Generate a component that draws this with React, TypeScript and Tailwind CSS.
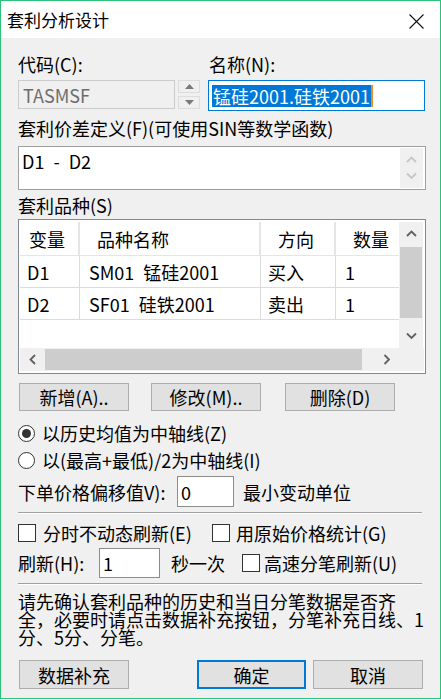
import type { ReactNode } from "react";

// Win10 style "套利分析设计" dialog

function Chev({ dir, color = "#606060" }: { dir: "up" | "down" | "left" | "right"; color?: string }) {
  const horiz = dir === "left" || dir === "right";
  const pts = {
    up: "1,6 5.5,1.5 10,6",
    down: "1,1.5 5.5,6 10,1.5",
    left: "6,1 1.5,5.5 6,10",
    right: "1.5,1 6,5.5 1.5,10",
  }[dir];
  return (
    <svg
      width={horiz ? 8 : 11}
      height={horiz ? 11 : 8}
      viewBox={horiz ? "0 0 8 11" : "0 0 11 8"}
      aria-hidden
    >
      <polyline points={pts} fill="none" stroke={color} strokeWidth="1.8" />
    </svg>
  );
}

function Tri({ up }: { up?: boolean }) {
  return (
    <svg width="9" height="5" viewBox="0 0 9 5" aria-hidden>
      <polygon points={up ? "0,5 4.5,0 9,5" : "0,0 9,0 4.5,5"} fill="#7a7a7a" />
    </svg>
  );
}

function Btn({ children, w = "w-[110px]", primary }: { children: ReactNode; w?: string; primary?: boolean }) {
  return (
    <div
      className={`flex items-center justify-center bg-[#e1e1e1] ${w} ${
        primary ? "border-2 border-[#0078d7]" : "border border-[#adadad]"
      }`}
    >
      {children}
    </div>
  );
}

function Radio({ on }: { on?: boolean }) {
  return (
    <span className="flex h-[17px] w-[17px] shrink-0 items-center justify-center rounded-full border border-[#333] bg-white">
      {on ? <span className="h-[9px] w-[9px] rounded-full bg-[#333]" /> : null}
    </span>
  );
}

function Check() {
  return <span className="block h-[18px] w-[18px] shrink-0 border border-[#333] bg-white" />;
}

function Sep() {
  return (
    <div className="w-[404px]">
      <div className="h-px bg-[#a0a0a0]" />
      <div className="h-px bg-white" />
    </div>
  );
}

const cols = ["w-[60px]", "w-[181px]", "w-[75px]", "w-[63px]"];

export default function App() {
  return (
    <div className="flex h-[699px] w-[441px] flex-col border border-[#2cc27a] bg-[#f0f0f0] font-['Noto_Sans_CJK_SC',sans-serif] text-[18px] leading-[18px] text-black">
      {/* Title bar */}
      <div className="flex h-[37px] shrink-0 items-center justify-between bg-white pl-[6px] pr-[16px]">
        <span className="text-[17px] leading-[20px]">套利分析设计</span>
        <svg width="15" height="15" viewBox="0 0 15 15" className="mt-[3px]" aria-hidden>
          <path d="M0.5 0.5 14.5 14.5M14.5 0.5 0.5 14.5" stroke="#111" strokeWidth="1.1" />
        </svg>
      </div>

      <div className="flex flex-col pl-[17px]">
        {/* code / name */}
        <div className="mt-[17px] grid grid-cols-[183px_217px] gap-x-[7px]">
          <div className="h-[18px]">代码(C):</div>
          <div className="h-[18px] pl-px">名称(N):</div>
          <div className="mt-[7px] flex">
            <div className="flex h-[29px] w-[157px] items-center border border-[#cccccc] bg-[#f0f0f0] pl-[4px] text-[#6d6d6d]">
              TASMSF
            </div>
            <div className="ml-[3px] flex flex-col gap-[3px]">
              <div className="flex h-[13px] w-[22px] items-center justify-center border border-[#dcdcdc] bg-[#f0f0f0]">
                <Tri up />
              </div>
              <div className="flex h-[13px] w-[22px] items-center justify-center border border-[#dcdcdc] bg-[#f0f0f0]">
                <Tri />
              </div>
            </div>
          </div>
          <div className="mt-[7px] flex h-[31px] w-[217px] items-center border border-[#0078d7] bg-white pl-[3px]">
            <span className="bg-[#0078d7] px-px leading-[22px] text-white">锰硅2001.硅铁2001</span>
            <span className="h-[22px] w-[2px] bg-[#f08a24]" />
          </div>
        </div>

        {/* spread definition */}
        <div className="mt-[8px] h-[18px]">套利价差定义(F)(可使用SIN等数学函数)</div>
        <div className="mt-[9px] flex h-[44px] w-[408px] border border-[#a0a0a0] bg-white">
          <div className="flex-1 whitespace-pre pl-[3px] pt-[5px] [word-spacing:5px]">D1 - D2</div>
          <div className="my-px mr-[2px] flex w-[23px] flex-col items-center justify-center gap-[8px] bg-[#f0f0f0]">
            <Chev dir="up" color="#c6c6c6" />
            <Chev dir="down" color="#c6c6c6" />
          </div>
        </div>

        {/* legs list */}
        <div className="mt-[6px] h-[18px]">套利品种(S)</div>
        <div className="mt-[5px] flex h-[155px] w-[408px] flex-col border border-[#828790] bg-white pl-px pr-px pt-[2px]">
          <div className="flex h-[126px]">
            <div className="w-[379px]">
              <div className="flex h-[34px] border-b border-[#e5e5e5]">
                {["变量", "品种名称", "方向", "数量"].map((h, i) => (
                  <div
                    key={h}
                    className={`flex items-center ${cols[i]} ${i === 0 ? "pl-[9px]" : "pl-[17px]"} ${
                      i < 3 ? "border-r-2 border-[#e5e5e5]" : ""
                    }`}
                  >
                    {h}
                  </div>
                ))}
              </div>
              {[
                ["D1", "SM01 锰硅2001", "买入", "1"],
                ["D2", "SF01 硅铁2001", "卖出", "1"],
              ].map((r) => (
                <div key={r[0]} className="flex h-[32px] border-b border-[#dcdcdc]">
                  {r.map((c, i) => (
                    <div
                      key={i}
                      className={`flex items-center whitespace-pre [word-spacing:5px] ${cols[i]} ${
                        i === 0 || i === 2 ? "pl-[7px]" : "pl-[9px]"
                      } ${i < 3 ? "border-r border-[#dcdcdc]" : ""}`}
                    >
                      {c}
                    </div>
                  ))}
                </div>
              ))}
            </div>
            <div className="flex w-[24px] flex-col bg-[#f0f0f0]">
              <div className="flex h-[24px] items-center justify-center">
                <Chev dir="up" />
              </div>
              <div className="mx-px mt-px h-[71px] bg-[#cdcdcd]" />
              <div className="h-[6px]" />
              <div className="flex h-[24px] items-center justify-center">
                <Chev dir="down" />
              </div>
            </div>
          </div>
          <div className="flex h-[23px] bg-[#f0f0f0]">
            <div className="flex w-[25px] items-center justify-center">
              <Chev dir="left" />
            </div>
            <div className="my-px h-[21px] w-[317px] bg-[#cdcdcd]" />
            <div className="w-[12px]" />
            <div className="flex w-[25px] items-center justify-center">
              <Chev dir="right" />
            </div>
          </div>
        </div>

        {/* list buttons */}
        <div className="mt-[9px] flex h-[28px] pl-px">
          <Btn>新增(A)..</Btn>
          <div className="w-[22px]" />
          <Btn>修改(M)..</Btn>
          <div className="w-[24px]" />
          <Btn>删除(D)</Btn>
        </div>

        {/* axis options */}
        <div className="mt-[13px] flex h-[18px] items-center gap-[7px]">
          <Radio on />
          <span>以历史均值为中轴线(Z)</span>
        </div>
        <div className="mt-[9px] flex h-[18px] items-center gap-[7px]">
          <Radio />
          <span>以(最高+最低)/2为中轴线(I)</span>
        </div>

        <div className="mt-[7px] flex h-[31px] items-center">
          <span className="w-[159px]">下单价格偏移值V):</span>
          <div className="flex h-[31px] w-[57px] items-center border border-[#8c8c8c] bg-white pl-[3px]">0</div>
          <span className="ml-[9px]">最小变动单位</span>
        </div>

        <div className="mt-[5px]">
          <Sep />
        </div>

        <div className="mt-[10px] flex h-[18px] items-center">
          <div className="flex w-[194px] items-center gap-[7px]">
            <Check />
            <span>分时不动态刷新(E)</span>
          </div>
          <div className="flex items-center gap-[6px]">
            <Check />
            <span>用原始价格统计(G)</span>
          </div>
        </div>

        <div className="mt-[6px] flex h-[30px] items-center">
          <span className="w-[81px]">刷新(H):</span>
          <div className="flex h-[30px] w-[61px] items-start border border-[#8c8c8c] bg-white pl-[3px] pt-[5px]">1</div>
          <span className="ml-[11px] w-[71px]">秒一次</span>
          <div className="flex items-center gap-[4px]">
            <Check />
            <span>高速分笔刷新(U)</span>
          </div>
        </div>

        <div className="mt-[5px]">
          <Sep />
        </div>

        <div className="mt-[7px] flex flex-col whitespace-nowrap">
          <span className="h-[18px]">请先确认套利品种的历史和当日分笔数据是否齐</span>
          <span className="h-[18px]">全，必要时请点击数据补充按钮，分笔补充日线、1</span>
          <span className="h-[18px]">分、5分、分笔。</span>
        </div>

        {/* footer */}
        <div className="mt-[14px] flex h-[29px] pl-px">
          <Btn>数据补充</Btn>
          <div className="w-[68px]" />
          <Btn w="w-[109px]" primary>
            确定
          </Btn>
          <div className="w-[7px]" />
          <Btn>取消</Btn>
        </div>
      </div>
    </div>
  );
}
